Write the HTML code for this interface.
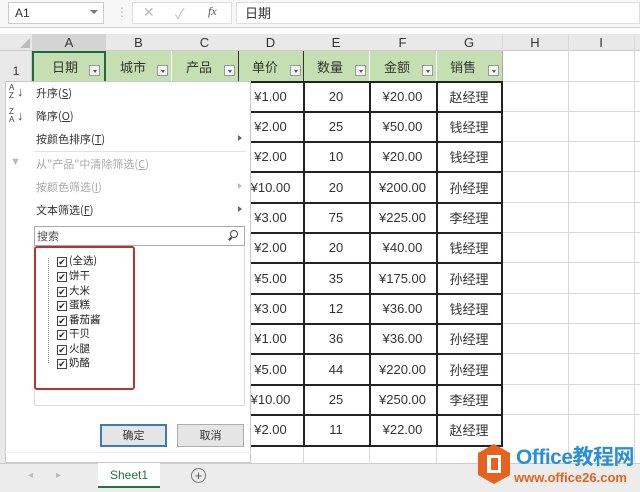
<!DOCTYPE html>
<html><head><meta charset="utf-8"><style>
*{margin:0;padding:0;box-sizing:border-box}
body{width:640px;height:492px;overflow:hidden;background:#fff;position:relative;font-family:"Liberation Sans","Noto Sans CJK SC",sans-serif;color:#333}
.a{position:absolute}
.c{position:absolute;text-align:center;font-size:13px;line-height:16px;height:16px}
.cn{font-family:"Noto Sans CJK SC","Liberation Sans",sans-serif}
.vl{position:absolute;width:1px;background:#d8d8d8}
.hl{position:absolute;height:1px;background:#d8d8d8}
.btn{position:absolute;width:11px;height:11px;border:1px solid #999;background:#f4f4f4}
.btn:after{content:"";position:absolute;left:3px;top:4px;border-left:2px solid transparent;border-right:2px solid transparent;border-top:3px solid #555}
.mi{position:absolute;left:36px;font-size:11px;color:#333;line-height:14px}
.dis{color:#aaa}
.cb{position:absolute;left:57px;font-size:10.5px;color:#222;line-height:13px}
.cb i{display:inline-block;width:10px;height:10px;border:1px solid #444;margin-right:2px;vertical-align:-1px;font-style:normal;font-size:9px;line-height:8px;text-align:center}
</style></head><body>
<div class="a" style="left:0;top:0;width:640px;height:28px;background:#f7f7f7;border-bottom:1px solid #d0d0d0"></div>
<div class="a" style="left:8px;top:2px;width:96px;height:22px;background:#fff;border:1px solid #ccc;font-size:12px;padding:3px 6px">A1</div>
<div class="a" style="left:90px;top:10px;border-left:4px solid transparent;border-right:4px solid transparent;border-top:4px solid #777"></div>
<div class="a" style="left:116px;top:5px;color:#bbb;font-size:12px">⋮</div>
<div class="a" style="left:132px;top:2px;width:100px;height:22px;background:#fff;border:1px solid #ddd"></div>
<div class="a" style="left:143px;top:4px;color:#bbb;font-size:14px">✕</div>
<div class="a" style="left:175px;top:4px;color:#bbb;font-size:14px">✓</div>
<div class="a" style="left:208px;top:4px;color:#555;font-size:12px;font-style:italic;font-family:'Liberation Serif',serif">fx</div>
<div class="a cn" style="left:236px;top:2px;width:404px;height:22px;background:#fff;border:1px solid #ddd;font-size:13px;padding:1px 8px;line-height:18px">日期</div>
<div class="a" style="left:0;top:34px;width:640px;height:17px;background:#e9e9e9;border-bottom:1px solid #ccc"></div>
<div class="a" style="left:32px;top:34px;width:74px;height:17px;background:#d4d4d4"></div>
<div class="a" style="left:20px;top:38px;border-left:10px solid transparent;border-bottom:10px solid #bbb"></div>
<div class="c" style="left:32px;top:35px;width:74px">A</div>
<div class="c" style="left:106px;top:35px;width:65px">B</div>
<div class="c" style="left:171px;top:35px;width:67px">C</div>
<div class="c" style="left:238px;top:35px;width:65px">D</div>
<div class="c" style="left:303px;top:35px;width:66px">E</div>
<div class="c" style="left:369px;top:35px;width:67px">F</div>
<div class="c" style="left:436px;top:35px;width:66px">G</div>
<div class="c" style="left:502px;top:35px;width:66px">H</div>
<div class="c" style="left:568px;top:35px;width:66px">I</div>
<div class="a" style="left:0;top:51px;width:32px;height:412px;background:#e9e9e9;border-right:1px solid #ccc"></div>
<div class="c" style="left:0;top:63px;width:32px;font-size:12px">1</div>
<div class="vl" style="left:502px;top:34px;height:430px"></div>
<div class="vl" style="left:568px;top:34px;height:430px"></div>
<div class="vl" style="left:634px;top:34px;height:430px"></div>
<div class="hl" style="left:250px;top:111px;width:390px"></div>
<div class="hl" style="left:250px;top:141px;width:390px"></div>
<div class="hl" style="left:250px;top:171px;width:390px"></div>
<div class="hl" style="left:250px;top:202px;width:390px"></div>
<div class="hl" style="left:250px;top:232px;width:390px"></div>
<div class="hl" style="left:250px;top:262px;width:390px"></div>
<div class="hl" style="left:250px;top:293px;width:390px"></div>
<div class="hl" style="left:250px;top:323px;width:390px"></div>
<div class="hl" style="left:250px;top:353px;width:390px"></div>
<div class="hl" style="left:250px;top:384px;width:390px"></div>
<div class="hl" style="left:250px;top:414px;width:390px"></div>
<div class="hl" style="left:250px;top:81px;width:390px"></div>
<div class="vl" style="left:369px;top:446px;height:18px"></div>
<div class="vl" style="left:436px;top:446px;height:18px"></div>
<div class="vl" style="left:303px;top:446px;height:18px"></div>
<div class="a" style="left:32px;top:51px;width:470px;height:30px;background:#c5dfb3"></div>
<div class="a" style="left:32px;top:51px;width:74px;height:30px;border:2px solid #1e6b3a;border-bottom:none"></div>
<div class="vl" style="left:171px;top:51px;height:30px;background:#fff"></div>
<div class="vl" style="left:238px;top:51px;height:30px;background:#333"></div>
<div class="vl" style="left:303px;top:51px;height:30px;background:#333"></div>
<div class="vl" style="left:369px;top:51px;height:30px;background:#fff"></div>
<div class="vl" style="left:436px;top:51px;height:30px;background:#fff"></div>
<div class="vl" style="left:502px;top:51px;height:30px;background:#aaa"></div>
<div class="c cn" style="left:40px;top:59px;width:50px">日期</div><div class="btn" style="left:89px;top:65px"></div>
<div class="c cn" style="left:108px;top:59px;width:50px">城市</div><div class="btn" style="left:157px;top:65px"></div>
<div class="c cn" style="left:174px;top:59px;width:50px">产品</div><div class="btn" style="left:224px;top:65px"></div>
<div class="c cn" style="left:240px;top:59px;width:50px">单价</div><div class="btn" style="left:290px;top:65px"></div>
<div class="c cn" style="left:305px;top:59px;width:50px">数量</div><div class="btn" style="left:355px;top:65px"></div>
<div class="c cn" style="left:372px;top:59px;width:50px">金额</div><div class="btn" style="left:422px;top:65px"></div>
<div class="c cn" style="left:438px;top:59px;width:50px">销售</div><div class="btn" style="left:488px;top:65px"></div>
<div class="a" style="left:238px;top:81px;width:265px;height:366px;border:2px solid #222"></div>
<div class="vl" style="left:303px;top:81px;height:366px;background:#222;width:2px"></div>
<div class="vl" style="left:369px;top:81px;height:366px;background:#222;width:2px"></div>
<div class="vl" style="left:436px;top:81px;height:366px;background:#222;width:2px"></div>
<div class="hl" style="left:238px;top:111px;width:265px;background:#222;height:2px"></div>
<div class="hl" style="left:238px;top:141px;width:265px;background:#222;height:2px"></div>
<div class="hl" style="left:238px;top:171px;width:265px;background:#222;height:2px"></div>
<div class="hl" style="left:238px;top:202px;width:265px;background:#222;height:2px"></div>
<div class="hl" style="left:238px;top:232px;width:265px;background:#222;height:2px"></div>
<div class="hl" style="left:238px;top:262px;width:265px;background:#222;height:2px"></div>
<div class="hl" style="left:238px;top:293px;width:265px;background:#222;height:2px"></div>
<div class="hl" style="left:238px;top:323px;width:265px;background:#222;height:2px"></div>
<div class="hl" style="left:238px;top:353px;width:265px;background:#222;height:2px"></div>
<div class="hl" style="left:238px;top:384px;width:265px;background:#222;height:2px"></div>
<div class="hl" style="left:238px;top:414px;width:265px;background:#222;height:2px"></div>
<div class="c" style="left:238px;top:89px;width:65px">¥1.00</div><div class="c" style="left:303px;top:89px;width:66px">20</div><div class="c" style="left:369px;top:89px;width:67px">¥20.00</div><div class="c cn" style="left:436px;top:89px;width:66px">赵经理</div>
<div class="c" style="left:238px;top:119px;width:65px">¥2.00</div><div class="c" style="left:303px;top:119px;width:66px">25</div><div class="c" style="left:369px;top:119px;width:67px">¥50.00</div><div class="c cn" style="left:436px;top:119px;width:66px">钱经理</div>
<div class="c" style="left:238px;top:149px;width:65px">¥2.00</div><div class="c" style="left:303px;top:149px;width:66px">10</div><div class="c" style="left:369px;top:149px;width:67px">¥20.00</div><div class="c cn" style="left:436px;top:149px;width:66px">钱经理</div>
<div class="c" style="left:238px;top:180px;width:65px">¥10.00</div><div class="c" style="left:303px;top:180px;width:66px">20</div><div class="c" style="left:369px;top:180px;width:67px">¥200.00</div><div class="c cn" style="left:436px;top:180px;width:66px">孙经理</div>
<div class="c" style="left:238px;top:210px;width:65px">¥3.00</div><div class="c" style="left:303px;top:210px;width:66px">75</div><div class="c" style="left:369px;top:210px;width:67px">¥225.00</div><div class="c cn" style="left:436px;top:210px;width:66px">李经理</div>
<div class="c" style="left:238px;top:240px;width:65px">¥2.00</div><div class="c" style="left:303px;top:240px;width:66px">20</div><div class="c" style="left:369px;top:240px;width:67px">¥40.00</div><div class="c cn" style="left:436px;top:240px;width:66px">钱经理</div>
<div class="c" style="left:238px;top:271px;width:65px">¥5.00</div><div class="c" style="left:303px;top:271px;width:66px">35</div><div class="c" style="left:369px;top:271px;width:67px">¥175.00</div><div class="c cn" style="left:436px;top:271px;width:66px">孙经理</div>
<div class="c" style="left:238px;top:301px;width:65px">¥3.00</div><div class="c" style="left:303px;top:301px;width:66px">12</div><div class="c" style="left:369px;top:301px;width:67px">¥36.00</div><div class="c cn" style="left:436px;top:301px;width:66px">钱经理</div>
<div class="c" style="left:238px;top:331px;width:65px">¥1.00</div><div class="c" style="left:303px;top:331px;width:66px">36</div><div class="c" style="left:369px;top:331px;width:67px">¥36.00</div><div class="c cn" style="left:436px;top:331px;width:66px">孙经理</div>
<div class="c" style="left:238px;top:362px;width:65px">¥5.00</div><div class="c" style="left:303px;top:362px;width:66px">44</div><div class="c" style="left:369px;top:362px;width:67px">¥220.00</div><div class="c cn" style="left:436px;top:362px;width:66px">孙经理</div>
<div class="c" style="left:238px;top:392px;width:65px">¥10.00</div><div class="c" style="left:303px;top:392px;width:66px">25</div><div class="c" style="left:369px;top:392px;width:67px">¥250.00</div><div class="c cn" style="left:436px;top:392px;width:66px">李经理</div>
<div class="c" style="left:238px;top:422px;width:65px">¥2.00</div><div class="c" style="left:303px;top:422px;width:66px">11</div><div class="c" style="left:369px;top:422px;width:67px">¥22.00</div><div class="c cn" style="left:436px;top:422px;width:66px">赵经理</div>
<div class="a" style="left:5px;top:81px;width:246px;height:382px;background:#fff;border:1px solid #c8c8c8"></div>
<div class="a" style="left:9px;top:84px;font-size:8px;line-height:8px;color:#444">A<br>Z</div><div class="a" style="left:17px;top:84px;font-size:13px;color:#444">↓</div>
<div class="a" style="left:9px;top:108px;font-size:8px;line-height:8px;color:#444">Z<br>A</div><div class="a" style="left:17px;top:108px;font-size:13px;color:#444">↓</div>
<div class="mi cn" style="top:86px">升序(<u>S</u>)</div>
<div class="mi cn" style="top:109px">降序(<u>O</u>)</div>
<div class="mi cn" style="top:132px">按颜色排序(<u>T</u>)</div><div class="a" style="left:238px;top:135px;border-top:3px solid transparent;border-bottom:3px solid transparent;border-left:4px solid #666"></div>
<div class="hl" style="left:34px;top:151px;width:212px;background:#e2e2e2"></div>
<div class="a" style="left:10px;top:156px;color:#bbb;font-size:11px">▼</div>
<div class="mi cn dis" style="top:157px">从"产品"中清除筛选(<u>C</u>)</div>
<div class="mi cn dis" style="top:180px">按颜色筛选(<u>I</u>)</div><div class="a" style="left:238px;top:183px;border-top:3px solid transparent;border-bottom:3px solid transparent;border-left:4px solid #bbb"></div>
<div class="mi cn" style="top:203px">文本筛选(<u>F</u>)</div><div class="a" style="left:238px;top:206px;border-top:3px solid transparent;border-bottom:3px solid transparent;border-left:4px solid #666"></div>
<div class="a cn" style="left:34px;top:226px;width:211px;height:20px;border:1px solid #aaa;font-size:11px;padding:2px 2px;color:#555;line-height:14px">搜索</div>
<div class="a" style="left:230px;top:230px;width:8px;height:8px;border:1.5px solid #444;border-radius:50%"></div>
<div class="a" style="left:228px;top:238px;width:4px;height:1.5px;background:#444;transform:rotate(-45deg)"></div>
<div class="a" style="left:34px;top:246px;width:211px;height:160px;border:1px solid #ddd;border-top:none"></div>
<div class="a" style="left:34px;top:246px;width:101px;height:144px;border:2.5px solid #b8332f;border-radius:3px"></div>
<div class="a" style="left:48px;top:258px;width:1px;height:105px;border-left:1px dotted #888"></div>
<div class="cb cn" style="top:254px"><i>✔</i>(全选)</div>
<div class="cb cn" style="top:269px"><i>✔</i>饼干</div>
<div class="cb cn" style="top:284px"><i>✔</i>大米</div>
<div class="cb cn" style="top:298px"><i>✔</i>蛋糕</div>
<div class="cb cn" style="top:313px"><i>✔</i>番茄酱</div>
<div class="cb cn" style="top:327px"><i>✔</i>干贝</div>
<div class="cb cn" style="top:342px"><i>✔</i>火腿</div>
<div class="cb cn" style="top:356px"><i>✔</i>奶酪</div>
<div class="a cn" style="left:100px;top:424px;width:67px;height:23px;background:#e5e5e5;border:2px solid #3c7ab8;font-size:11px;text-align:center;line-height:19px">确定</div>
<div class="a cn" style="left:177px;top:424px;width:67px;height:23px;background:#e5e5e5;border:1px solid #adadad;font-size:11px;text-align:center;line-height:21px">取消</div>
<div class="hl" style="left:5px;top:452px;width:246px;background:#eee"></div>
<div class="a" style="left:0;top:463px;width:640px;height:29px;background:#ececec;border-top:1px solid #ccc"></div>
<div class="a" style="left:28px;top:470px;color:#bbb;font-size:10px">◂</div>
<div class="a" style="left:56px;top:470px;color:#bbb;font-size:10px">▸</div>
<div class="a" style="left:98px;top:463px;width:62px;height:25px;background:#fff;border-bottom:2px solid #217346;font-size:12px;color:#217346;text-align:center;line-height:24px">Sheet1</div>
<div class="a" style="left:191px;top:468px;width:15px;height:15px;border:1px solid #777;border-radius:50%;font-size:13px;line-height:13px;text-align:center;color:#555">+</div>
<svg class="a" style="left:477px;top:443px" width="34" height="42" viewBox="0 0 34 42"><polygon points="17,1 33,10 33,32 17,41 1,32 1,10" fill="#e8621f"/><rect x="10" y="12" width="14" height="18" fill="#fff"/><rect x="14" y="15" width="7" height="12" fill="#e8621f"/></svg>
<div class="a" style="left:516px;top:445px;font-size:21px;font-weight:bold;color:#2b8fd8;letter-spacing:-0.5px;line-height:26px">Office教程网</div>
<div class="a" style="left:514px;top:470px;font-size:13px;font-weight:bold;color:#e8621f;line-height:15px">www.office26.com</div>
</body></html>
